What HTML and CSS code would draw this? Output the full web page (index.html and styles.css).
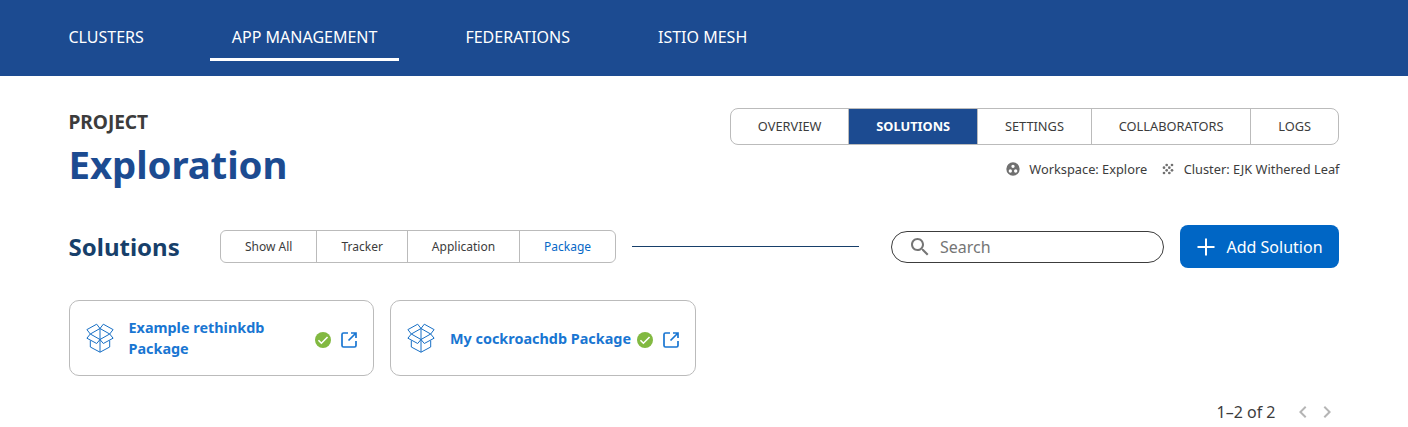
FILE: index.html
```html
<!DOCTYPE html>
<html lang="en">
<head>
<meta charset="utf-8">
<title>Exploration - Solutions</title>
<link rel="stylesheet" href="styles.css">
</head>
<body>
<svg class="defs" width="0" height="0">
  <symbol id="box" viewBox="0 0 28 30">
    <path d="M14 5.500 4.300 11 0.900 6.600 10.700 1.200 14 5.500 17.300 1.200 27.100 6.600 23.700 11ZM14 5.500V16.500M14 16.500 4.300 11 0.900 15.200 10.700 20.500 14 16.500 17.300 20.500 27.100 15.200 23.700 11ZM4.300 17.500V24L14 29.200 23.700 24V17.500M14 16.500V29.200"/>
  </symbol>
  <symbol id="check" viewBox="2 2 20 20">
    <circle cx="12" cy="12" r="10" fill="#82b941"/>
    <path d="M6.300 12.300 10 16 17.700 8.300" fill="none" stroke="#fff" stroke-width="2"/>
  </symbol>
  <symbol id="open" viewBox="0 0 16 16">
    <path d="M7 1H2.500Q1 1 1 2.500V13.500Q1 15 2.500 15H13.500Q15 15 15 13.500V9M10 1H15V6M15 1 7.500 8.500"/>
  </symbol>
</svg>
<nav class="topbar">
  <a class="nav-item">CLUSTERS</a>
  <a class="nav-item active">APP MANAGEMENT</a>
  <a class="nav-item">FEDERATIONS</a>
  <a class="nav-item">ISTIO MESH</a>
</nav>
<main class="page">
  <header class="project">
    <div>
      <div class="eyebrow">PROJECT</div>
      <h1 class="title">Exploration</h1>
    </div>
    <div class="side">
      <div class="tabs">
        <a class="tab">OVERVIEW</a><a class="tab selected">SOLUTIONS</a><a class="tab">SETTINGS</a><a class="tab">COLLABORATORS</a><a class="tab">LOGS</a>
      </div>
      <div class="meta">
        <svg class="meta-icon" viewBox="0 0 24 24"><path fill-rule="evenodd" d="M12 2a10 10 0 1 0 0 20a10 10 0 0 0 0-20ZM8 17.500a2.500 2.500 0 1 1 0-5a2.500 2.500 0 0 1 0 5ZM9.500 8a2.500 2.500 0 1 1 5 0a2.500 2.500 0 0 1-5 0ZM16 17.500a2.500 2.500 0 1 1 0-5a2.500 2.500 0 0 1 0 5Z"/></svg>
        <span class="workspace">Workspace: Explore</span>
        <svg class="meta-icon" viewBox="0 0 24 24"><circle cx="10" cy="14" r="2"/><circle cx="6" cy="10" r="2"/><circle cx="6" cy="18" r="2"/><circle cx="18" cy="6" r="2"/><circle cx="14" cy="18" r="2"/><circle cx="18" cy="14" r="2"/><circle cx="14" cy="10" r="2"/><circle cx="10" cy="6" r="2"/></svg>
        <span>Cluster: EJK Withered Leaf</span>
      </div>
    </div>
  </header>
  <section class="toolbar">
    <h2 class="heading">Solutions</h2>
    <div class="filters">
      <a class="filter">Show All</a><a class="filter">Tracker</a><a class="filter">Application</a><a class="filter current">Package</a>
    </div>
    <div class="rule"></div>
    <label class="search">
      <svg class="search-icon" viewBox="0 0 24 24"><path d="M15.500 14h-.79l-.28-.27C15.410 12.590 16 11.110 16 9.500 16 5.910 13.090 3 9.500 3S3 5.910 3 9.500 5.910 16 9.500 16c1.610 0 3.090-.59 4.230-1.570l.27.28v.79l5 4.990L20.490 19l-4.990-5zm-6 0C7.010 14 5 11.990 5 9.500S7.010 5 9.500 5 14 7.010 14 9.500 11.990 14 9.500 14z"/></svg>
      <input class="search-input" placeholder="Search">
    </label>
    <button class="add"><svg class="plus" viewBox="0 0 18 18"><path d="M9 .5V17.500M.5 9H17.500"/></svg>Add Solution</button>
  </section>
  <section class="cards">
    <article class="card">
      <svg class="box"><use href="#box"/></svg>
      <h3 class="name">Example rethinkdb Package</h3>
      <svg class="check"><use href="#check"/></svg>
      <svg class="open"><use href="#open"/></svg>
    </article>
    <article class="card">
      <svg class="box"><use href="#box"/></svg>
      <h3 class="name">My cockroachdb Package</h3>
      <svg class="check"><use href="#check"/></svg>
      <svg class="open"><use href="#open"/></svg>
    </article>
  </section>
  <footer class="pager">
    <span class="count">1–2 of 2</span>
    <svg class="chevron" viewBox="0 0 24 24"><path d="M15.410 7.410 14 6l-6 6 6 6 1.410-1.410L10.830 12z"/></svg>
    <svg class="chevron" viewBox="0 0 24 24"><path d="M10 6 8.590 7.410 13.170 12l-4.580 4.590L10 18l6-6z"/></svg>
  </footer>
</main>
</body>
</html>
```
FILE: styles.css
```css
* { box-sizing: border-box; }
body {
  margin: 0;
  height: 427px;
  overflow: hidden;
  background: #fff;
  color: #3c3c3c;
  font-family: "Noto Sans", sans-serif;
}
h1, h2, h3 { margin: 0; }
svg { flex: none; }
.defs { display: block; height: 0; }

.topbar {
  display: flex;
  gap: 44px;
  height: 76px;
  padding: 15px 46.5px;
  background: #1c4b91;
}
.nav-item {
  height: 46px;
  padding: 0 22px;
  border-bottom: 3px solid transparent;
  color: #fff;
  font-size: 16px;
  line-height: 44px;
}
.nav-item.active { border-color: #fff; }

.page { padding: 32px 69px 0 68.5px; }
.project { display: flex; justify-content: space-between; height: 117px; }
.eyebrow { font-size: 19.2px; font-weight: 700; line-height: 28px; letter-spacing: -.1px; }
.title { margin-top: 1px; color: #1c4b91; font-size: 38.4px; line-height: 54px; letter-spacing: -.1px; }
.side { display: flex; flex-direction: column; align-items: flex-end; }
.tabs { display: flex; height: 37px; overflow: hidden; border: 1px solid #bbb; border-radius: 8px; }
.tab { padding: 0 26.9px; font-size: 12.8px; line-height: 35px; }
.tab + .tab { border-left: 1px solid #bbb; }
.tab.selected { background: #1c4b91; color: #fff; font-weight: 700; }
.meta { display: flex; align-items: center; height: 20px; margin: 14px -.5px 0 0; font-size: 12.8px; line-height: 20px; }
.meta-icon { width: 16px; height: 16px; margin-right: 8px; fill: #707070; }
.workspace { margin-right: 12.5px; }

.toolbar { display: flex; align-items: center; height: 43px; }
.heading { width: 151.5px; color: #173f6a; font-size: 24px; line-height: 36px; }
.filters { display: flex; height: 33px; border: 1px solid #bbb; border-radius: 6px; }
.filter { padding: 0 24px; font-size: 12px; line-height: 31px; }
.filter + .filter { border-left: 1px solid #bbb; }
.filter.current { color: #0668c7; }
.rule { flex: 1; height: 1px; margin: 0 32px 0 16px; background: #173f6a; }
.search { display: flex; align-items: center; width: 273px; height: 32px; padding-left: 16px; border: 1px solid #3c3c3c; border-radius: 16px; }
.search-icon { width: 24px; height: 24px; fill: #757575; }
.search-input { width: 200px; margin-left: 8px; padding: 0; border: 0; outline: 0; background: none; font: 16px/24px "Noto Sans", sans-serif; }
.search-input::placeholder { color: #757575; }
.add { display: flex; align-items: center; width: 159px; height: 43px; margin-left: 16px; padding: 0 0 0 16.5px; border: 0; border-radius: 8px; background: #0066c5; color: #fff; font: 16px/24px "Noto Sans", sans-serif; white-space: nowrap; }
.plus { width: 18px; height: 18px; margin-right: 12px; stroke: #fff; stroke-width: 2; }

.cards { display: grid; grid-template-columns: 305.5px 305.5px; gap: 16px; margin-top: 32px; }
.card { display: flex; align-items: center; height: 76px; padding: 0 16px; border: 1px solid #bbb; border-radius: 10px; }
.box { width: 28px; height: 30px; margin-right: 15px; fill: none; stroke: #176fc5; stroke-width: 1; }
.name { flex: 1; color: #1976d2; font-size: 14.4px; line-height: 21px; }
.check { width: 16px; height: 16px; margin: 3px 10px 0 5px; }
.open { width: 16px; height: 16px; margin-top: 3px; fill: none; stroke: #1976d2; stroke-width: 1.7; }

.pager { display: flex; align-items: center; justify-content: flex-end; height: 24px; margin-top: 24px; }
.count { margin-right: 15.5px; font-size: 16px; line-height: 24px; }
.chevron { width: 24px; height: 24px; fill: #b5b5b5; }
```
